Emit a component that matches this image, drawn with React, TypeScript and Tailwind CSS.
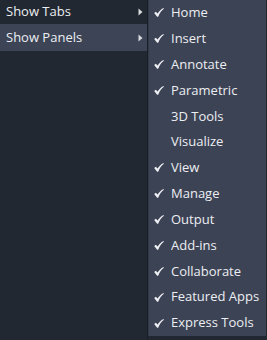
const leftItems = ['Show Tabs', 'Show Panels'];

const panels = [
  { label: 'Home', checked: true },
  { label: 'Insert', checked: true },
  { label: 'Annotate', checked: true },
  { label: 'Parametric', checked: true },
  { label: '3D Tools', checked: false },
  { label: 'Visualize', checked: false },
  { label: 'View', checked: true },
  { label: 'Manage', checked: true },
  { label: 'Output', checked: true },
  { label: 'Add-ins', checked: true },
  { label: 'Collaborate', checked: true },
  { label: 'Featured Apps', checked: true },
  { label: 'Express Tools', checked: true },
];

function Arrow() {
  return (
    <svg width="5" height="8" viewBox="0 0 5 8" className="text-[#d8dbe0]">
      <path d="M0.5 0.5 L4.5 4 L0.5 7.5 Z" fill="currentColor" />
    </svg>
  );
}

function Check() {
  return (
    <svg width="10" height="9" viewBox="0 0 10 9" className="text-[#eef0f3]">
      <path d="M0.2 5 L1.8 3.7 L3.6 5.6 C5 3.4 6.9 1.4 9.5 0.1 L9.9 0.8 C7.5 2.5 5.6 5 4.2 8.8 L3.1 8.8 Z" fill="currentColor" />
    </svg>
  );
}

export default function App() {
  return (
    <div
      className="flex w-[267px] h-[340px] bg-[#222831] text-[13px] text-[#eceef2] overflow-hidden"
      style={{ fontFamily: '"Open Sans", "Noto Sans", sans-serif' }}
    >
      <div className="w-[148px] flex-none border-r border-[#1a1f27] flex flex-col">
        {leftItems.map((item, i) => (
          <div
            key={item}
            className={
              'flex items-center justify-between pl-[6px] pr-[4px] ' +
              (i === 1 ? 'h-[27px] bg-[#3c4456]' : 'h-[24px]')
            }
          >
            <span>{item}</span>
            <Arrow />
          </div>
        ))}
      </div>
      <div className="w-[118px] flex-none h-[336px] bg-[#3c4355] border-l border-[#333a49]">
        {panels.map((p) => (
          <div key={p.label} className="flex items-center h-[25.85px]">
            <span className="w-[22px] flex-none pl-[5px] flex items-center">{p.checked && <Check />}</span>
            <span>{p.label}</span>
          </div>
        ))}
      </div>
    </div>
  );
}
